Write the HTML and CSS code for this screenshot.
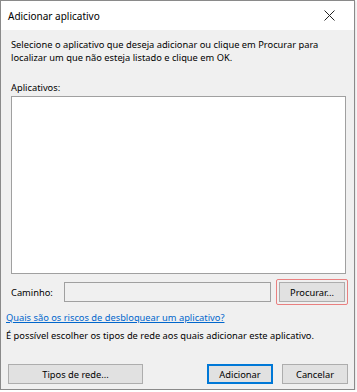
FILE: index.html
```html
<!DOCTYPE html>
<html lang="pt-br">
<head>
  <meta charset="UTF-8">
  <title>Adicionar aplicativo</title>
  <link rel="stylesheet" href="styles.css">
</head>
<body>
  <div class="dialog">
    <div class="titlebar">
      <span class="title">Adicionar aplicativo</span>
      <svg class="close" width="11" height="11" viewBox="0 0 11 11">
        <path d="M0.5 0.5 L10.5 10.5 M10.5 0.5 L0.5 10.5" stroke="#222" stroke-width="1" fill="none"/>
      </svg>
    </div>
    <div class="content">
      <p class="intro">Selecione o aplicativo que deseja adicionar ou clique em Procurar para localizar um que não esteja listado e clique em OK.</p>

      <label class="list-label">Aplicativos:</label>
      <div class="app-list"></div>

      <div class="path-row">
        <span class="path-label">Caminho:</span>
        <div class="path-input"></div>
        <div class="focus-ring">
          <button class="btn browse">Procurar...</button>
        </div>
      </div>

      <a class="risk-link" href="#">Quais são os riscos de desbloquear um aplicativo?</a>
      <p class="note">É possível escolher os tipos de rede aos quais adicionar este aplicativo.</p>

      <div class="actions">
        <button class="btn network">Tipos de rede...</button>
        <div class="right-actions">
          <button class="btn primary">Adicionar</button>
          <button class="btn">Cancelar</button>
        </div>
      </div>
    </div>
  </div>
</body>
</html>
```

FILE: styles.css
```css
:root {
  --dialog-bg: #f0f0f0;
  --border-color: #a0a0a0;
  --button-bg: #e1e1e1;
  --button-border: #adadad;
  --link-color: #0066cc;
  --text-color: #000;
}
body {
  margin: 0;
  background-color: #fff;
  font-family: "Noto Sans", "Liberation Sans", Arial, sans-serif;
  font-size: 9.3px;
  color: var(--text-color);
}
.dialog {
  width: 353px;
  height: 388px;
  border: 1px solid #8a8a8a;
  background-color: var(--dialog-bg);
  box-shadow: 1px 1px 2px rgba(0,0,0,0.12);
  display: flex;
  flex-direction: column;
}
.titlebar {
  height: 29px;
  background-color: #fff;
  display: flex;
  align-items: center;
  justify-content: space-between;
  padding: 0 19px 0 7px;
}
.title {
  font-size: 10px;
  color: #000;
}
.content {
  padding: 8px 8px 0 10px;
}
.intro {
  margin: 0;
  line-height: 13px;
}
.list-label {
  display: block;
  margin-top: 17px;
  line-height: 13px;
}
.app-list {
  height: 176px;
  margin-top: 2px;
  background-color: #fff;
  border: 1px solid var(--border-color);
}
.path-row {
  display: flex;
  align-items: center;
  margin: 5px -2px 0 0;
}
.path-label {
  width: 53px;
}
.path-input {
  width: 205px;
  height: 18px;
  border: 1px solid var(--border-color);
  background-color: var(--dialog-bg);
}
.focus-ring {
  margin-left: 5px;
  padding: 2px;
  border: 1px solid #e98080;
  border-radius: 2px;
}
.btn {
  font-family: inherit;
  font-size: 9.3px;
  color: #000;
  background-color: var(--button-bg);
  border: 1px solid var(--button-border);
  padding: 0;
  height: 20px;
  display: block;
}
.browse {
  width: 66px;
}
.risk-link {
  display: block;
  margin: 6px 0 0 -5px;
  line-height: 13px;
  color: var(--link-color);
}
.note {
  margin: 5px 0 0 -5px;
  line-height: 13px;
}
.actions {
  display: flex;
  justify-content: space-between;
  margin: 22px -2px 0 -3px;
}
.network {
  width: 135px;
}
.right-actions {
  display: flex;
  gap: 9px;
}
.right-actions .btn {
  width: 66px;
}
.btn.primary {
  border: 2px solid #0078d7;
}
```
